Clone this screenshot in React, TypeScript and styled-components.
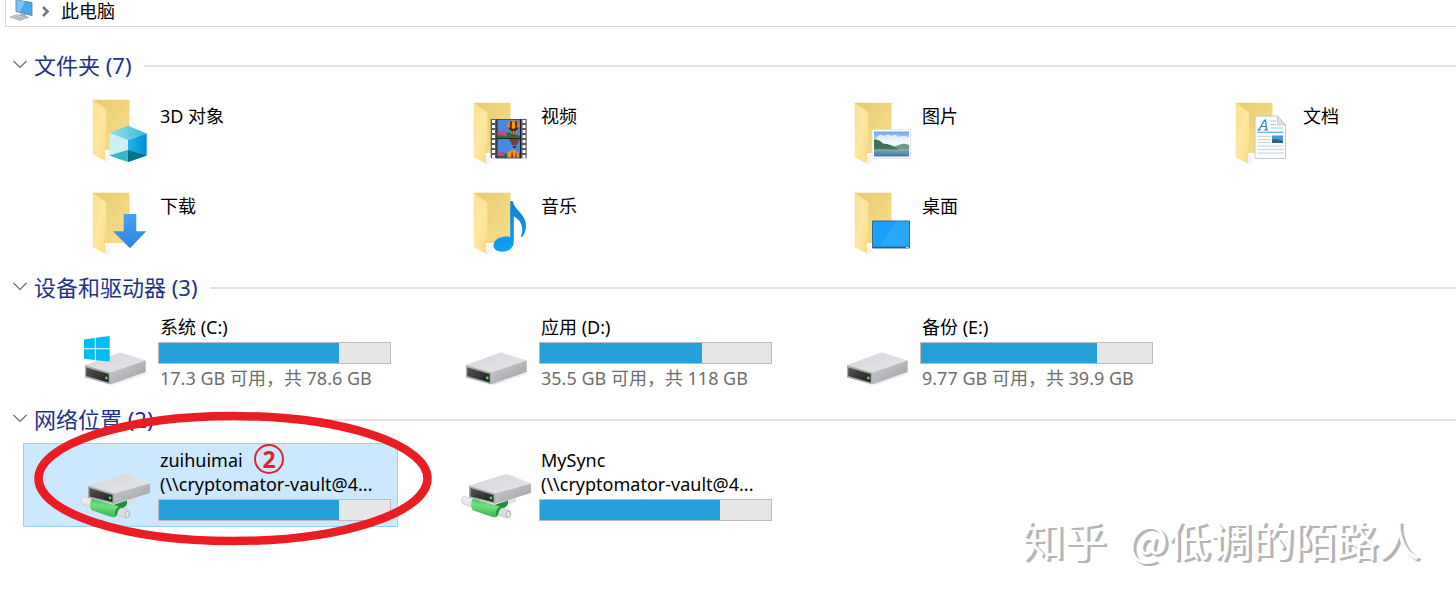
import React from "react";
import styled, { createGlobalStyle } from "styled-components";

const GlobalStyle = createGlobalStyle`
  * { box-sizing: border-box; }
  body {
    margin: 0;
    background: #fff;
    color: #000;
    font-family: "Noto Sans", "Noto Sans CJK SC", sans-serif;
    font-size: 18px;
    line-height: 24px;
  }
`;

const Page = styled.div`
  position: relative;
  min-height: 100vh;
  overflow: hidden;
`;

const AddressBar = styled.nav`
  display: flex;
  align-items: flex-start;
  height: 27px;
  margin: 0 0 16px 5px;
  padding-left: 4px;
  border-left: 1px solid #d9d9d9;
  border-bottom: 1px solid #d9d9d9;
`;

const CrumbIcon = styled.svg`
  width: 46px;
  height: 24px;
  flex: none;
`;

const Crumb = styled.a`
  margin-left: 5px;
  line-height: 22px;
  color: #000;
  text-decoration: none;
`;

const Section = styled.section`
  margin-bottom: 2px;
`;

const SectionHeader = styled.header`
  display: flex;
  align-items: center;
  height: 46px;
  padding-left: 12px;
`;

const Toggle = styled.button`
  display: flex;
  width: 16px;
  height: 16px;
  margin: 0 6px 4px 0;
  padding: 0;
  border: 0;
  background: none;
`;

const SectionTitle = styled.h2`
  margin: 0 12px 0 0;
  padding-bottom: 2px;
  color: #1e3287;
  font-size: 22px;
  font-weight: 400;
  line-height: 30px;
  white-space: nowrap;
`;

const Rule = styled.span`
  flex: 1;
  height: 2px;
  background: #e2e2e2;
`;

const Grid = styled.div`
  display: grid;
  grid-template-columns: repeat(4, 375px);
  gap: 6px;
  padding-left: 23px;
`;

const Tile = styled.button<{ $selected?: boolean }>`
  position: relative;
  display: flex;
  gap: 7px;
  height: 84px;
  padding: 0 0 0 56px;
  border: 0;
  background: ${(p) => (p.$selected ? "#cce8ff" : "transparent")};
  box-shadow: ${(p) => (p.$selected ? "inset 0 0 0 1px #99d1f0" : "none")};
  color: inherit;
  font: inherit;
  text-align: left;
`;

const Icon = styled.svg`
  width: 72px;
  height: 84px;
  flex: none;
  overflow: visible;
`;

const Info = styled.span<{ $top: number }>`
  display: flex;
  flex-direction: column;
  width: 233px;
  padding-top: ${(p) => p.$top}px;
`;

const Label = styled.span<{ $muted?: boolean }>`
  padding-left: 2px;
  color: ${(p) => (p.$muted ? "#6d6d6d" : "#000")};
  white-space: nowrap;
`;

const Meter = styled.span`
  display: block;
  height: 22px;
  margin: 3px 0 2px;
  border: 1px solid #bcbcbc;
  background: #e6e6e6;
`;

const MeterFill = styled.span`
  display: block;
  height: 100%;
  background: #26a0da;
`;

const Ring = styled.svg`
  position: absolute;
  left: 11px;
  top: -32px;
  width: 400px;
  height: 136px;
  z-index: 1;
  pointer-events: none;
`;

const StepBadge = styled.span`
  position: absolute;
  left: 231px;
  top: 1px;
  width: 30px;
  height: 30px;
  border: 2px solid #e0232c;
  border-radius: 50%;
  color: #e0232c;
  font-size: 23px;
  font-weight: 700;
  line-height: 26px;
  text-align: center;
`;

const Watermark = styled.div`
  position: absolute;
  right: 36px;
  bottom: 30px;
  display: flex;
  gap: 22px;
  color: #fff;
  font-family: "Noto Sans CJK SC", sans-serif;
  font-size: 42px;
  line-height: 60px;
  text-shadow: 2px 2px 0 #b4b4b4, 3px 2px 0 #b4b4b4;
  white-space: nowrap;
`;

const Defs = () => (
  <svg width="0" height="0" style={{ display: "block" }} aria-hidden="true">
    <defs>
      <linearGradient id="flap" x1="0" y1="0" x2="1" y2="1">
        <stop offset="0" stopColor="#fbe08f" />
        <stop offset="0.5" stopColor="#ffe7a2" />
        <stop offset="1" stopColor="#f9da80" />
      </linearGradient>
      <linearGradient id="back" x1="0" y1="0" x2="1" y2="1">
        <stop offset="0" stopColor="#e8ca70" />
        <stop offset="1" stopColor="#f9df8c" />
      </linearGradient>
      <linearGradient id="caseTop" x1="0" y1="0" x2="1" y2="1">
        <stop offset="0" stopColor="#d5d6d9" />
        <stop offset="1" stopColor="#e5e6e8" />
      </linearGradient>
      <linearGradient id="caseSide" x1="0" y1="0" x2="1" y2="1">
        <stop offset="0" stopColor="#cdced1" />
        <stop offset="1" stopColor="#9c9ea1" />
      </linearGradient>
      <linearGradient id="dark" x1="0" y1="0" x2="1" y2="1">
        <stop offset="0" stopColor="#555" />
        <stop offset="1" stopColor="#1e1e1e" />
      </linearGradient>
      <linearGradient id="cubeR" x1="0" y1="0" x2="1" y2="0">
        <stop offset="0" stopColor="#25b5dc" />
        <stop offset="1" stopColor="#008fd5" />
      </linearGradient>
      <linearGradient id="cubeTop" x1="0" y1="0" x2="1" y2="0">
        <stop offset="0" stopColor="#8fe3ea" />
        <stop offset="1" stopColor="#38b9dc" />
      </linearGradient>
      <linearGradient id="note" x1="0" y1="0" x2="0" y2="1">
        <stop offset="0" stopColor="#0a7fd6" />
        <stop offset="1" stopColor="#12a0f2" />
      </linearGradient>
      <linearGradient id="arrow" x1="0" y1="0" x2="0" y2="1">
        <stop offset="0" stopColor="#45a2f2" />
        <stop offset="1" stopColor="#2c86df" />
      </linearGradient>
      <linearGradient id="sky" x1="0" y1="0" x2="0" y2="1">
        <stop offset="0" stopColor="#6ba3ea" />
        <stop offset="0.6" stopColor="#d8ebfb" />
        <stop offset="1" stopColor="#e6f3fb" />
      </linearGradient>
      <linearGradient id="lake" x1="0" y1="0" x2="0" y2="1">
        <stop offset="0" stopColor="#7fa9c0" />
        <stop offset="1" stopColor="#41769f" />
      </linearGradient>
      <linearGradient id="green" x1="0.6" y1="0" x2="0.4" y2="1">
        <stop offset="0" stopColor="#34bf4d" />
        <stop offset="0.4" stopColor="#74e082" />
        <stop offset="1" stopColor="#2bb045" />
      </linearGradient>
      <linearGradient id="pipe" x1="0.6" y1="0" x2="0.4" y2="1">
        <stop offset="0" stopColor="#f4f4f4" />
        <stop offset="1" stopColor="#cfd1d3" />
      </linearGradient>
    </defs>
  </svg>
);

const Folder = ({ y = 0 }: { y?: number }) => (
  <g transform={`translate(0 ${y})`}>
    <path d="M18 71 26.500 75.500 32 73 28 66Z" fill="#f3f3f3" />
    <path d="M13.700 13.700H50.500V64H20Z" fill="url(#back)" />
    <path d="M13.700 13.700 27.300 23.500V55Q27.300 57 26 59V74.300L13.700 68.500Z" fill="url(#flap)" />
  </g>
);

const Balloon = ({ x, y }: { x: number; y: number }) => (
  <g transform={`translate(${x} ${y})`}>
    <path d="M-6 0A6 6 0 0 1 6 0C6 3.500 3 5 2 7.500H-2C-3 5-6 3.500-6 0Z" fill="#e2a324" />
    <path d="M-3.500-4.500C-5 0-3 4-1.500 7H-.5C-2 2-2-2-.8-5.500ZM3.500-4.500C5 0 3 4 1.500 7H.5C2 2 2-2 .8-5.500Z" fill="#8c1f22" />
    <path d="M-5.800 1Q0 4.500 5.800 1L4 4Q0 6-4 4Z" fill="#37263f" />
    <path d="M-1.500 8.300H1.500V10.500H-1.500Z" fill="#6d431a" />
  </g>
);

const holes = [31, 36, 41, 46, 51, 56, 61, 66];

const folderArt: Record<string, React.ReactNode> = {
  objects: (
    <>
      <path d="M49 36.700 67.700 44.500 49 51 30.300 44Z" fill="url(#cubeTop)" />
      <path d="M30.300 44 49 51V73L30.300 66.500Z" fill="#c9f1f3" />
      <path d="M49 51 67.700 44.500V66.500L49 73Z" fill="url(#cubeR)" />
      <path d="M30.300 66.500 48.800 61V73Z" fill="#35b6c6" />
      <path d="M48.800 61 67.700 66.500 49 73Z" fill="#04718f" />
    </>
  ),
  videos: (
    <>
      <path d="M30.700 30H66.700V69.300H30.700Z" fill="#5a5a5e" />
      <path d="M36.500 30H61V69.300H36.500Z" fill="#18233c" />
      <path d="M37.500 30.500H60V48.500H37.500ZM37.500 50H60V68.500H37.500Z" fill="#4c86e0" />
      <path d="M37.500 45 41 44 45 45 49 43 60 47V48.500H37.500Z" fill="#2c6e3a" />
      <path d="M37.500 43 40 41 42 45 44 41 47 46V47.500L37.500 46Z" fill="#c9486f" />
      <path d="M37.500 65 42 63 48 66 60 64V68.500H37.500Z" fill="#275c51" />
      <path d="M37.500 64 41 62 45 66V67.500L37.500 66.500Z" fill="#b95076" />
      <Balloon x={53.5} y={37} />
      <path d="M49 50H60L56.500 56H52.500Z" fill="#733f36" />
      <path d="M53 57H56V59H53Z" fill="#402a2c" />
      <path d="M47.500 68.500C46 58 60 58 59 68.500Z" fill="#e1a126" />
      <path d="M51 68.500 52 61 53.500 68.500ZM55 68.500 56 61.500 57 68.500Z" fill="#a3252b" />
      {holes.map((y) => (
        <path key={y} d={`M32 ${y}h3v3h-3zM62.500 ${y}h3v3h-3z`} fill="#fff" />
      ))}
    </>
  ),
  pictures: (
    <>
      <path d="M31 40.700H69.500V69.500H31Z" fill="#fff" stroke="#d5dae0" strokeWidth="0.700" />
      <path d="M33 42.500H68V61H33Z" fill="url(#sky)" />
      <path d="M36 48q3-4 7-1q4-3 8 0q4-3 6 1q5-2 11 0v8H34Z" fill="#fff" opacity="0.700" />
      <path d="M33 60.500H68V67.500H33Z" fill="url(#lake)" />
      <path d="M48 60.500Q53 57 58 56Q63 53.500 68 56V60.500Z" fill="#6c9a86" />
      <path d="M33 50.500Q38 50 42 54.500Q50 55 58 60.500H33Z" fill="#3f7454" />
    </>
  ),
  documents: (
    <>
      <path d="M33 27H55.500L63.500 36V69.500H33Z" fill="#f9fbfd" stroke="#b8bdc4" strokeWidth="0.800" />
      <path d="M55.500 27V36H63.500Z" fill="#dfe3e8" stroke="#b8bdc4" strokeWidth="0.700" />
      <path d="M37 40.500 42.500 31.500 43.500 31 44.500 40.500M39 37.500H44M35.500 40.800H38.500M42.500 40.800H46" fill="none" stroke="#2186bd" strokeWidth="1.200" />
      <path d="M48.500 32H54M48.500 35.500H54M48.500 39H61" stroke="#9fcbe3" strokeWidth="1" />
      <path d="M35.500 43.300H61.500" stroke="#59aedb" strokeWidth="1.200" />
      <path d="M35.500 47.500H48.500M35.500 50.500H48.500M35.500 53.500H48.500M35.500 57H61.500M35.500 60.500H61.500M35.500 64H61.500" stroke="#c2c9d0" strokeWidth="0.800" />
      <path d="M50 46.500H61V54H50Z" fill="#4a9bdc" />
      <path d="M50 50.500Q54 49 61 52V54H50Z" fill="#2f6478" />
    </>
  ),
  downloads: <path d="M44.700 35H57.300V52.300H67.300L51 69.300 34 52.300H44.700Z" fill="url(#arrow)" />,
  music: (
    <path
      d="M50.200 22.500Q51.500 21.500 53 22.500C54 31 66 35 66 47Q65.800 54 62 58Q60.500 58.500 61 56.500C65 47 59 40 53.800 37.500V62C53.800 68 49.500 72.700 42.500 72.700C36.500 72.700 33.200 70 33.500 66C34 60.500 41 56 50.200 58Z"
      fill="url(#note)"
    />
  ),
  desktop: (
    <>
      <path d="M31.500 42H68.500V69H31.500Z" fill="#18a0fb" stroke="#2a6d96" strokeWidth="1" />
      <path d="M55 42.500H68V68H38Z" fill="#2fa9fb" opacity="0.700" />
      <path d="M32 67.800H68V69H32Z" fill="#17618f" />
      <path d="M65 68H67.500V69H65Z" fill="#d6ebf7" />
    </>
  ),
};

const DriveCase = () => (
  <>
    <path d="M31 73 67 61.500 70 61 65 64 35 74Z" fill="#efefef" />
    <path d="M6 54 39 42Q41 41.200 43 42L66.700 49.500 31 61.500Z" fill="url(#caseTop)" />
    <path d="M6 54 31 61.500V73.500L6 66.500Z" fill="#a9abae" />
    <path d="M31 61.500 66.700 49.500V61L31 73.500Z" fill="url(#caseSide)" />
    <path d="M7.300 56.500 29.700 63V71.500L7.300 65Z" fill="url(#dark)" />
    <circle cx="27.300" cy="67" r="1.400" fill="#45e04b" />
  </>
);

const driveArt: Record<string, React.ReactNode> = {
  system: (
    <>
      <DriveCase />
      <path d="M5 28.500 15.800 27V37.300H5ZM16.800 26.800 30.700 25V37.300H16.800ZM5 38.300H15.800V49L5 47.800ZM16.800 38.300H30.700V50.500L16.800 49.200Z" fill="#00bcf2" />
    </>
  ),
  local: <DriveCase />,
  network: (
    <>
      <path d="M46 57 56 54V59L46 62Z" fill="#dfe0e2" />
      <path d="M34 62 48 57.500V61Q46 65 41 65.500L36 70Z" fill="#1e8f38" />
      <path d="M4.500 53.500 49.500 67.300Q51.500 69 50.500 73Q49.500 75.500 46.500 75L3 61Q1 59.500 1.800 56.500Q2.500 53.500 4.500 53.500Z" fill="url(#pipe)" stroke="#c3c5c7" strokeWidth="0.700" />
      <ellipse cx="48.300" cy="71.300" rx="2.200" ry="3.200" fill="#e4e5e6" stroke="#a6a8aa" strokeWidth="0.800" />
      <path d="M13 55.500 40 63.500Q35.500 66 35.500 71Q35.500 73 36.500 74Q34.500 74.500 31 73.500L13.500 67.500Q11 66.500 11 62Q11 58 13 55.500Z" fill="url(#green)" />
      <path d="M40 63.500 42 65Q38.500 67 38.500 70.800L36.500 74Q35.500 73 35.500 71Q35.500 66 40 63.500Z" fill="#1f9a3b" />
      <path d="M9 42.700 44 31.500Q46.500 30.500 49 31.500L71 40.500 35 50.500Z" fill="url(#caseTop)" />
      <path d="M9 42.700 35 50.500V61L9 54.500Z" fill="#a9abae" />
      <path d="M35 50.500 71 40.500V50L35 61Z" fill="url(#caseSide)" />
      <path d="M10.500 45 33.500 52V59L10.500 53.500Z" fill="url(#dark)" />
      <circle cx="31" cy="55" r="1.400" fill="#45e04b" />
    </>
  ),
};

const folders = [
  { name: "3D 对象", art: "objects" },
  { name: "视频", art: "videos" },
  { name: "图片", art: "pictures" },
  { name: "文档", art: "documents" },
  { name: "下载", art: "downloads" },
  { name: "音乐", art: "music" },
  { name: "桌面", art: "desktop" },
];

const drives = [
  { name: "系统 (C:)", art: "system", used: 78, note: "17.3 GB 可用，共 78.6 GB" },
  { name: "应用 (D:)", art: "local", used: 70, note: "35.5 GB 可用，共 118 GB" },
  { name: "备份 (E:)", art: "local", used: 76, note: "9.77 GB 可用，共 39.9 GB" },
];

const shares = [
  { name: "zuihuimai", path: "(\\\\cryptomator-vault@4...", used: 78, selected: true },
  { name: "MySync", path: "(\\\\cryptomator-vault@4...", used: 78, selected: false },
];

const UsageBar = ({ used }: { used: number }) => (
  <Meter role="meter" aria-label="已用空间" aria-valuemin={0} aria-valuemax={100} aria-valuenow={used}>
    <MeterFill style={{ width: `${used}%` }} />
  </Meter>
);

const Group = ({ title, children }: { title: string; children: React.ReactNode }) => (
  <Section>
    <SectionHeader>
      <Toggle type="button" aria-label={title} aria-expanded="true">
        <svg width="16" height="16" viewBox="0 0 16 16">
          <path d="M1.500 5 8 11.500 14.500 5" fill="none" stroke="#6b6b6b" strokeWidth="1.200" />
        </svg>
      </Toggle>
      <SectionTitle>{title}</SectionTitle>
      <Rule />
    </SectionHeader>
    <Grid>{children}</Grid>
  </Section>
);

export default function App() {
  return (
    <Page>
      <GlobalStyle />
      <Defs />
      <AddressBar>
        <CrumbIcon viewBox="0 0 46 24" aria-hidden="true">
          <path d="M6 0 22 2.500V15.500L6 11.500Z" fill="#47a9ea" stroke="#56758c" strokeWidth="0.800" />
          <path d="M6.500 0 15 1.500 10 12 6.500 11Z" fill="#7ac7f5" />
          <path d="M11 13 16 14.500V16L20 17.500 16 18.500 9 16.500Z" fill="#a6b0b8" />
          <path d="M0 17 7 14.500 17 17.500 10 20.500Z" fill="#cfd5da" stroke="#9aa4ac" strokeWidth="0.700" />
          <path d="M3 17 12 19.300M5 16 14 18.500" stroke="#8f99a1" strokeWidth="0.600" />
          <path d="M33 7 37.500 11.500 33 16" fill="none" stroke="#757575" strokeWidth="2.600" />
        </CrumbIcon>
        <Crumb href="#">此电脑</Crumb>
      </AddressBar>

      <Group title="文件夹 (7)">
        {folders.map((f) => (
          <Tile key={f.name} type="button">
            <Icon viewBox="0 0 72 84" aria-hidden="true">
              <Folder y={f.art === "objects" ? -3 : 0} />
              {folderArt[f.art]}
            </Icon>
            <Info $top={15}>
              <Label>{f.name}</Label>
            </Info>
          </Tile>
        ))}
      </Group>

      <Group title="设备和驱动器 (3)">
        {drives.map((d) => (
          <Tile key={d.name} type="button">
            <Icon viewBox="0 0 72 84" aria-hidden="true">{driveArt[d.art]}</Icon>
            <Info $top={4}>
              <Label>{d.name}</Label>
              <UsageBar used={d.used} />
              <Label $muted>{d.note}</Label>
            </Info>
          </Tile>
        ))}
      </Group>

      <Group title="网络位置 (2)">
        {shares.map((s) => (
          <Tile key={s.name} type="button" $selected={s.selected}>
            <Icon viewBox="0 0 72 84" aria-hidden="true">{driveArt.network}</Icon>
            <Info $top={5}>
              <Label>{s.name}</Label>
              <Label>{s.path}</Label>
              <UsageBar used={s.used} />
            </Info>
            {s.selected && (
              <>
                <StepBadge>2</StepBadge>
                <Ring viewBox="0 0 400 136" aria-hidden="true">
                  <ellipse cx="199" cy="67.500" rx="194.500" ry="62.500" fill="none" stroke="#ea1c24" strokeWidth="8.500" />
                </Ring>
              </>
            )}
          </Tile>
        ))}
      </Group>

      <Watermark>
        <span>知乎</span>
        <span>@低调的陌路人</span>
      </Watermark>
    </Page>
  );
}
